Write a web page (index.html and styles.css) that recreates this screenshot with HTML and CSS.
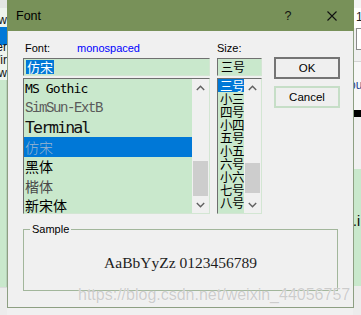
FILE: index.html
```html
<!DOCTYPE html>
<html>
<head>
<meta charset="utf-8">
<link rel="stylesheet" href="styles.css">
</head>
<body>
<div class="desktop">
  <div class="bg-left">
    <div class="bl-top"></div>
    <div class="bl-light">
      <div class="bl-line first"><span>ew</span></div>
      <div class="bl-sel"></div>
      <div class="bl-line up"><span>ter</span></div>
      <div class="bl-line"><span>Wir</span></div>
      <div class="bl-line"><span>ew</span></div>
    </div>
    <div class="bl-green"></div>
    <div class="bl-bottom"></div>
  </div>

  <div class="bg-right">
    <div class="br-top"></div>
    <div class="br-line"><span>1</span></div>
    <div class="br-box"></div>
    <div class="br-gray"></div>
    <div class="br-light"><span class="br-ou">ou</span></div>
    <div class="br-black"></div>
    <div class="br-mid"></div>
    <div class="br-green"><span>.i</span></div>
    <div class="br-bottom"></div>
  </div>

  <div class="dialog">
    <div class="titlebar">
      <span class="title">Font</span>
      <span class="help">?</span>
      <svg class="close" width="10" height="10" viewBox="0 0 10 10"><path d="M0.5 0.5 L9.5 9.5 M9.5 0.5 L0.5 9.5" stroke="#111" stroke-width="1.1" fill="none"/></svg>
    </div>
    <div class="body">
      <div class="top">
        <div class="font-col">
          <div class="label"><span class="lab">Font:</span><span class="hint">monospaced</span></div>
          <div class="input"><span class="sel">仿宋</span></div>
          <div class="list">
            <div class="items">
              <div class="row f-ms">MS Gothic</div>
              <div class="row f-sim">SimSun-ExtB</div>
              <div class="row f-term">Terminal</div>
              <div class="row cjk selected"><span class="f-fang">仿宋</span></div>
              <div class="row cjk">黑体</div>
              <div class="row cjk f-kai">楷体</div>
              <div class="row cjk">新宋体</div>
            </div>
            <div class="sb">
              <div class="arrow"><svg width="9" height="6" viewBox="0 0 9 6"><polyline points="0.8,5 4.5,1.3 8.2,5" fill="none" stroke="#606060" stroke-width="1.4"/></svg></div>
              <div class="track"><div class="thumb font-thumb"></div></div>
              <div class="arrow"><svg width="9" height="6" viewBox="0 0 9 6"><polyline points="0.8,1 4.5,4.7 8.2,1" fill="none" stroke="#606060" stroke-width="1.4"/></svg></div>
            </div>
          </div>
        </div>
        <div class="size-col">
          <div class="label"><span>Size:</span></div>
          <div class="input size-input"><span>三号</span></div>
          <div class="list">
            <div class="items size-items">
              <div class="srow selected">三号</div>
              <div class="srow">小三</div>
              <div class="srow">四号</div>
              <div class="srow">小四</div>
              <div class="srow">五号</div>
              <div class="srow">小五</div>
              <div class="srow">六号</div>
              <div class="srow">小六</div>
              <div class="srow">七号</div>
              <div class="srow">八号</div>
            </div>
            <div class="sb">
              <div class="arrow"><svg width="9" height="6" viewBox="0 0 9 6"><polyline points="0.8,5 4.5,1.3 8.2,5" fill="none" stroke="#606060" stroke-width="1.4"/></svg></div>
              <div class="track"><div class="thumb size-thumb"></div></div>
              <div class="arrow"><svg width="9" height="6" viewBox="0 0 9 6"><polyline points="0.8,1 4.5,4.7 8.2,1" fill="none" stroke="#606060" stroke-width="1.4"/></svg></div>
            </div>
          </div>
        </div>
        <div class="buttons">
          <div class="btn ok">OK</div>
          <div class="btn cancel">Cancel</div>
        </div>
      </div>
      <fieldset class="sample">
        <legend>Sample</legend>
        <div class="sample-text">AaBbYyZz 0123456789</div>
      </fieldset>
    </div>
  </div>

  <div class="watermark">https://blog.csdn.net/weixin_44056757</div>
</div>
</body>
</html>
```

FILE: styles.css
```css
* { box-sizing: border-box; }
html, body { margin: 0; padding: 0; }
body {
  width: 361px;
  height: 315px;
  overflow: hidden;
  background: #f0f0f0;
  font-family: "Liberation Sans", Arial, sans-serif;
}
.desktop {
  position: relative;
  width: 361px;
  height: 315px;
  overflow: hidden;
  background: #f0f0f0;
}

/* background window on the left */
.bg-left {
  position: absolute;
  left: 0;
  top: 0;
  width: 7px;
  height: 315px;
  display: flex;
  flex-direction: column;
  overflow: hidden;
  font-size: 12px;
}
.bl-top { height: 8px; background: #e4e6e4; flex: none; }
.bl-light { height: 72px; background: #eef4ee; padding-top: 6px; flex: none; }
.bl-line {
  height: 13px;
  line-height: 13px;
  display: flex;
  justify-content: flex-end;
  white-space: nowrap;
  color: #111;
}
.bl-line.up { margin-top: -4px; }
.bl-sel { height: 18px; background: #0078d7; }
.bl-green { height: 207px; background: #c9e8cc; border-right: 1px solid #b7d2ba; flex: none; }
.bl-bottom { flex: 1; background: #ececec; border-top: 1px solid #dcdcdc; }

/* background window on the right */
.bg-right {
  position: absolute;
  left: 353px;
  top: 0;
  width: 8px;
  height: 315px;
  display: flex;
  flex-direction: column;
  overflow: hidden;
  font-size: 12px;
}
.br-top { height: 8px; background: #f4f4f4; flex: none; }
.br-line { height: 20px; background: #fff; line-height: 18px; padding-left: 3px; white-space: nowrap; color: #222; flex: none; }
.br-box { height: 22px; margin-left: 3px; border: 1px solid #8a8a8a; border-right: none; background: #fff; flex: none; }
.br-gray { height: 12px; background: #f0f0f0; border-bottom: 1px solid #d4d4d4; flex: none; }
.br-light { height: 48px; background: #f7f7f7; padding-top: 16px; line-height: 14px; white-space: nowrap; flex: none; }
.br-ou { color: #1d3c8f; margin-left: -4px; }
.br-black { height: 7px; background: #000; flex: none; }
.br-mid { height: 52px; background: #f0f0f0; flex: none; }
.br-green { height: 117px; background: #c9e8cc; padding-top: 45px; line-height: 14px; font-size: 14px; white-space: nowrap; flex: none; }
.br-bottom { flex: 1; background: #ececec; }

/* dialog window */
.dialog {
  position: absolute;
  left: 7px;
  top: 0;
  width: 347px;
  height: 308px;
  border: 1px solid #8d9f82;
  border-top: none;
  background: #f0f0f0;
  display: flex;
  flex-direction: column;
}
.titlebar {
  height: 31px;
  flex: none;
  background: #789159;
  display: flex;
  align-items: center;
  padding: 0 17px 0 9px;
  margin: 0 -1px;
}
.title { flex: 1; font-size: 12.5px; color: #000; padding-top: 1px; }
.help { width: 8px; font-size: 12.5px; color: #111; text-align: center; margin-right: 35px; }
.close { display: block; }

.body { padding: 10px 13px 0 15px; }
.top { display: flex; align-items: flex-start; }
.font-col { width: 187px; flex: none; }
.size-col { width: 45px; flex: none; margin-left: 7px; }
.buttons {
  width: 66px;
  flex: none;
  margin-left: 12px;
  padding-top: 16px;
  display: flex;
  flex-direction: column;
  gap: 7px;
}

.label {
  height: 17px;
  line-height: 15px;
  font-size: 11px;
  color: #000;
  display: flex;
  padding-left: 2px;
}
.size-col .label { padding-left: 0; }
.lab { width: 52px; }
.hint { color: #0000ff; }

.input {
  height: 18px;
  border: 1px solid #d3e6d3;
  border-top-color: #707070;
  border-left-color: #707070;
  background: #c9e8cc;
  padding-left: 2px;
  display: flex;
  align-items: center;
  margin-bottom: 2px;
  font-family: "Noto Sans CJK SC", sans-serif;
}
.sel {
  background: #0078d7;
  color: #fff;
  font-size: 13px;
  line-height: 14px;
  padding: 0 1px;
}
.size-input { padding-left: 3px; font-size: 12px; line-height: 14px; color: #000; }

.list {
  height: 136px;
  border: 1px solid #d3e6d3;
  border-top-color: #6e6e6e;
  border-left-color: #6e6e6e;
  display: flex;
  background: #c9e8cc;
}
.items { flex: 1; overflow: hidden; }
.row {
  height: 19.4px;
  display: flex;
  align-items: center;
  padding-left: 1px;
  white-space: nowrap;
  color: #000;
}
.f-ms { font-family: "DejaVu Sans Mono", monospace; font-size: 13px; letter-spacing: -0.9px; }
.f-sim { font-family: "Liberation Mono", monospace; font-size: 14px; letter-spacing: -1.4px; color: #5a5a5a; }
.f-term { font-family: "DejaVu Sans Mono", monospace; font-size: 16.5px; letter-spacing: -1.9px; color: #111; }
.cjk { font-family: "Noto Sans CJK SC", sans-serif; font-size: 14px; }
.selected { background: #0078d7; }
.f-fang { color: #9db6cf; font-weight: 300; }
.f-kai { color: #4a4a4a; }

.size-items { padding-top: 0; }
.srow {
  height: 13px;
  line-height: 13px;
  padding-left: 2px;
  font-family: "Noto Sans CJK SC", sans-serif;
  font-size: 12.5px;
  letter-spacing: -0.6px;
  white-space: nowrap;
  color: #000;
}
.srow.selected { color: #fff; }

.sb {
  width: 17px;
  flex: none;
  background: #f0f0f0;
  display: flex;
  flex-direction: column;
}
.arrow {
  height: 17px;
  flex: none;
  display: flex;
  align-items: center;
  justify-content: center;
}
.arrow svg { display: block; }
.track {
  flex: 1;
  display: flex;
  flex-direction: column;
  justify-content: flex-end;
}
.thumb { background: #cdcdcd; margin: 0 1px; }
.font-thumb { height: 35px; }
.size-thumb { height: 30px; margin-bottom: 3px; }

.btn {
  height: 22px;
  display: flex;
  align-items: center;
  justify-content: center;
  font-size: 11.5px;
  color: #000;
  background: #efefef;
}
.ok { border: 2px solid #747474; }
.cancel { border: 2px solid #c6dec7; }

.sample {
  width: 315px;
  margin: 8px 0 0 0;
  padding: 0 6px;
  border: 1px solid #a2b69b;
  min-width: 0;
}
.sample legend {
  font-size: 11px;
  line-height: 14px;
  padding: 0 2px;
  color: #000;
}
.sample-text {
  height: 54px;
  display: flex;
  align-items: center;
  justify-content: center;
  font-family: "Liberation Serif", serif;
  font-size: 15.5px;
  color: #1e1e1e;
  white-space: nowrap;
}

.watermark {
  position: absolute;
  left: 78px;
  top: 286px;
  font-size: 16px;
  line-height: 18px;
  color: rgba(196, 196, 196, 0.85);
  text-shadow: 0 0 1px #fff;
  white-space: nowrap;
}
```
